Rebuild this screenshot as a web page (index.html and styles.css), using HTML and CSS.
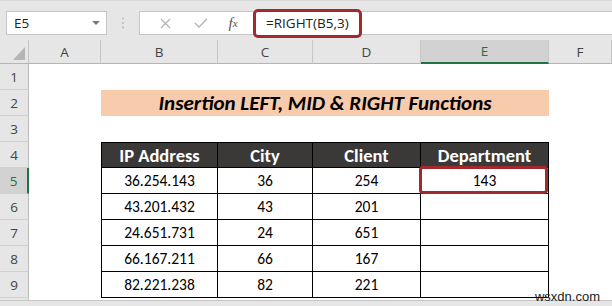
FILE: index.html
```html
<!DOCTYPE html>
<html lang="en">
<head>
  <meta charset="UTF-8" />
  <title>RIGHT function - Excel</title>
  <link rel="stylesheet" href="styles.css">
</head>
<body>
  <div class="app">
    <div class="formula-bar">
      <div class="name-box"><span>E5</span><span class="caret"></span></div>
      <div class="grip">
        <svg width="4" height="12" viewBox="0 0 4 12"><circle cx="2" cy="1.5" r="1" fill="#b8b8b8"/><circle cx="2" cy="6" r="1" fill="#b8b8b8"/><circle cx="2" cy="10.5" r="1" fill="#b8b8b8"/></svg>
      </div>
      <div class="formula-box">
        <span class="fb-btn">
          <svg width="11" height="11" viewBox="0 0 11 11"><path d="M1 1 L10 10 M10 1 L1 10" stroke="#b4b4b4" stroke-width="1.3" fill="none"/></svg>
        </span>
        <span class="fb-btn">
          <svg width="14" height="10" viewBox="0 0 14 10"><path d="M1 5 L5 9 L13 1" stroke="#b4b4b4" stroke-width="1.4" fill="none"/></svg>
        </span>
        <span class="fb-btn fx">f<small>x</small></span>
        <span class="formula">=RIGHT(B5,3)</span>
      </div>
    </div>

    <div class="sheet">
      <div class="corner"><span class="corner-tri"></span></div>
      <div class="col-head">A</div>
      <div class="col-head">B</div>
      <div class="col-head">C</div>
      <div class="col-head">D</div>
      <div class="col-head active">E</div>
      <div class="col-head">F</div>

      <div class="row-head">1</div>

      <div class="row-head">2</div>
      <div class="title">Insertion LEFT, MID &amp; RIGHT Functions</div>

      <div class="row-head">3</div>

      <div class="row-head">4</div>
      <div class="cell th first">IP Address</div>
      <div class="cell th">City</div>
      <div class="cell th">Client</div>
      <div class="cell th">Department</div>

      <div class="row-head active">5</div>
      <div class="cell first">36.254.143</div>
      <div class="cell">36</div>
      <div class="cell">254</div>
      <div class="cell selected">143</div>

      <div class="row-head">6</div>
      <div class="cell first">43.201.432</div>
      <div class="cell">43</div>
      <div class="cell">201</div>
      <div class="cell"></div>

      <div class="row-head">7</div>
      <div class="cell first">24.651.731</div>
      <div class="cell">24</div>
      <div class="cell">651</div>
      <div class="cell"></div>

      <div class="row-head">8</div>
      <div class="cell first">66.167.211</div>
      <div class="cell">66</div>
      <div class="cell">167</div>
      <div class="cell"></div>

      <div class="row-head">9</div>
      <div class="cell first">82.221.238</div>
      <div class="cell">82</div>
      <div class="cell">221</div>
      <div class="cell"></div>

      <div class="row-head"></div>
    </div>

    <div class="h-scroll"></div>
    <div class="watermark">wsxdn.com</div>
  </div>
</body>
</html>
```

FILE: styles.css
```css
html, body {
  margin: 0;
  background: #fff;
}
.app {
  position: relative;
  width: 612px;
  height: 306px;
  overflow: hidden;
  display: flex;
  flex-direction: column;
  font-family: 'Open Sans', 'Noto Sans', sans-serif;
}
.formula-bar {
  height: 40px;
  flex: none;
  box-sizing: border-box;
  padding-top: 10px;
  display: flex;
  align-items: flex-start;
  background: #e6e6e6;
  border-top: 1px solid #dadada;
}
.name-box {
  margin-left: 6px;
  width: 101px;
  height: 24px;
  box-sizing: border-box;
  border: 1px solid #c6c6c6;
  background: #fff;
  display: flex;
  align-items: center;
  justify-content: space-between;
  padding: 0 6px 0 7px;
  font-size: 13.5px;
  color: #222;
}
.caret {
  width: 0;
  height: 0;
  border-top: 4px solid #7a7a7a;
  border-left: 4px solid transparent;
  border-right: 4px solid transparent;
}
.grip {
  width: 32px;
  height: 24px;
  display: flex;
  align-items: center;
  justify-content: center;
}
.formula-box {
  flex: 1;
  height: 24px;
  box-sizing: border-box;
  border: 1px solid #c6c6c6;
  border-right: none;
  background: #fff;
  display: flex;
  align-items: center;
  padding-left: 13px;
}
.fb-btn {
  width: 24px;
  display: flex;
  justify-content: center;
  margin-right: 12px;
}
.fb-btn.fx {
  width: 16px;
  margin-right: 12px;
  font-family: 'Liberation Serif', serif;
  font-style: italic;
  font-size: 15px;
  color: #555;
  line-height: 1;
}
.fb-btn.fx small {
  font-size: 11px;
  position: relative;
  top: 2px;
}
.formula {
  height: 29px;
  box-sizing: border-box;
  border: 3px solid #a22a2e;
  border-radius: 5px;
  background: #fff;
  padding: 0 10px;
  display: flex;
  align-items: center;
  font-size: 13.5px;
  color: #222;
}

.sheet {
  flex: 1;
  display: grid;
  grid-template-columns: 29px 72px 117px 95px 108px 128px 1fr;
  grid-template-rows: 24px;
  grid-auto-rows: 26px;
  overflow: hidden;
  font-family: 'Carlito', 'Lato', sans-serif;
}
.corner {
  grid-column: 1;
  position: relative;
  background: #e6e6e6;
  border-right: 1px solid #c6c6c6;
  border-bottom: 1px solid #b5b5b5;
}
.corner-tri {
  position: absolute;
  right: 3px;
  bottom: 3px;
  width: 0;
  height: 0;
  border-left: 12px solid transparent;
  border-bottom: 13px solid #b5b5b5;
}
.col-head {
  background: #e6e6e6;
  border-right: 1px solid #c6c6c6;
  border-bottom: 1px solid #b5b5b5;
  display: flex;
  align-items: center;
  justify-content: center;
  font-family: 'Open Sans', sans-serif;
  font-size: 13.5px;
  color: #444;
}
.col-head.active {
  background: #d2d2d2;
  border-bottom: 2px solid #217346;
  color: #217346;
}
.row-head {
  grid-column: 1;
  background: #e6e6e6;
  border-right: 1px solid #bdbdbd;
  border-bottom: 1px solid #d0d0d0;
  display: flex;
  align-items: center;
  justify-content: center;
  font-family: 'Open Sans', sans-serif;
  font-size: 13.5px;
  color: #444;
}
.row-head.active {
  background: #d2d2d2;
  border-right: 2px solid #217346;
  color: #217346;
}
.title {
  grid-column: 3 / 7;
  background: #f8cbad;
  display: flex;
  align-items: center;
  justify-content: center;
  font-weight: 900;
  font-style: italic;
  font-size: 21px;
  color: #000;
}
.cell {
  box-sizing: border-box;
  border-right: 1px solid #000;
  border-bottom: 1px solid #000;
  display: flex;
  align-items: center;
  justify-content: center;
  font-size: 15.5px;
  color: #000;
}
.cell.first {
  grid-column: 3;
  border-left: 1px solid #000;
}
.cell.th {
  background: #3b3838;
  color: #fff;
  font-weight: bold;
  font-size: 18.5px;
  border-top: 1px solid #000;
}
.cell.selected {
  position: relative;
}
.cell.selected::after {
  content: '';
  position: absolute;
  top: -2px;
  left: -2px;
  right: 0;
  bottom: -1px;
  border: 3px solid #a22a2e;
  border-radius: 4px;
}
.h-scroll {
  flex: none;
  height: 5px;
  background: #e6e6e6;
  border-top: 1px solid #c6c6c6;
}
.watermark {
  position: absolute;
  right: 12px;
  bottom: 2px;
  font-family: 'Liberation Sans', sans-serif;
  font-size: 13px;
  color: #222;
}
```
